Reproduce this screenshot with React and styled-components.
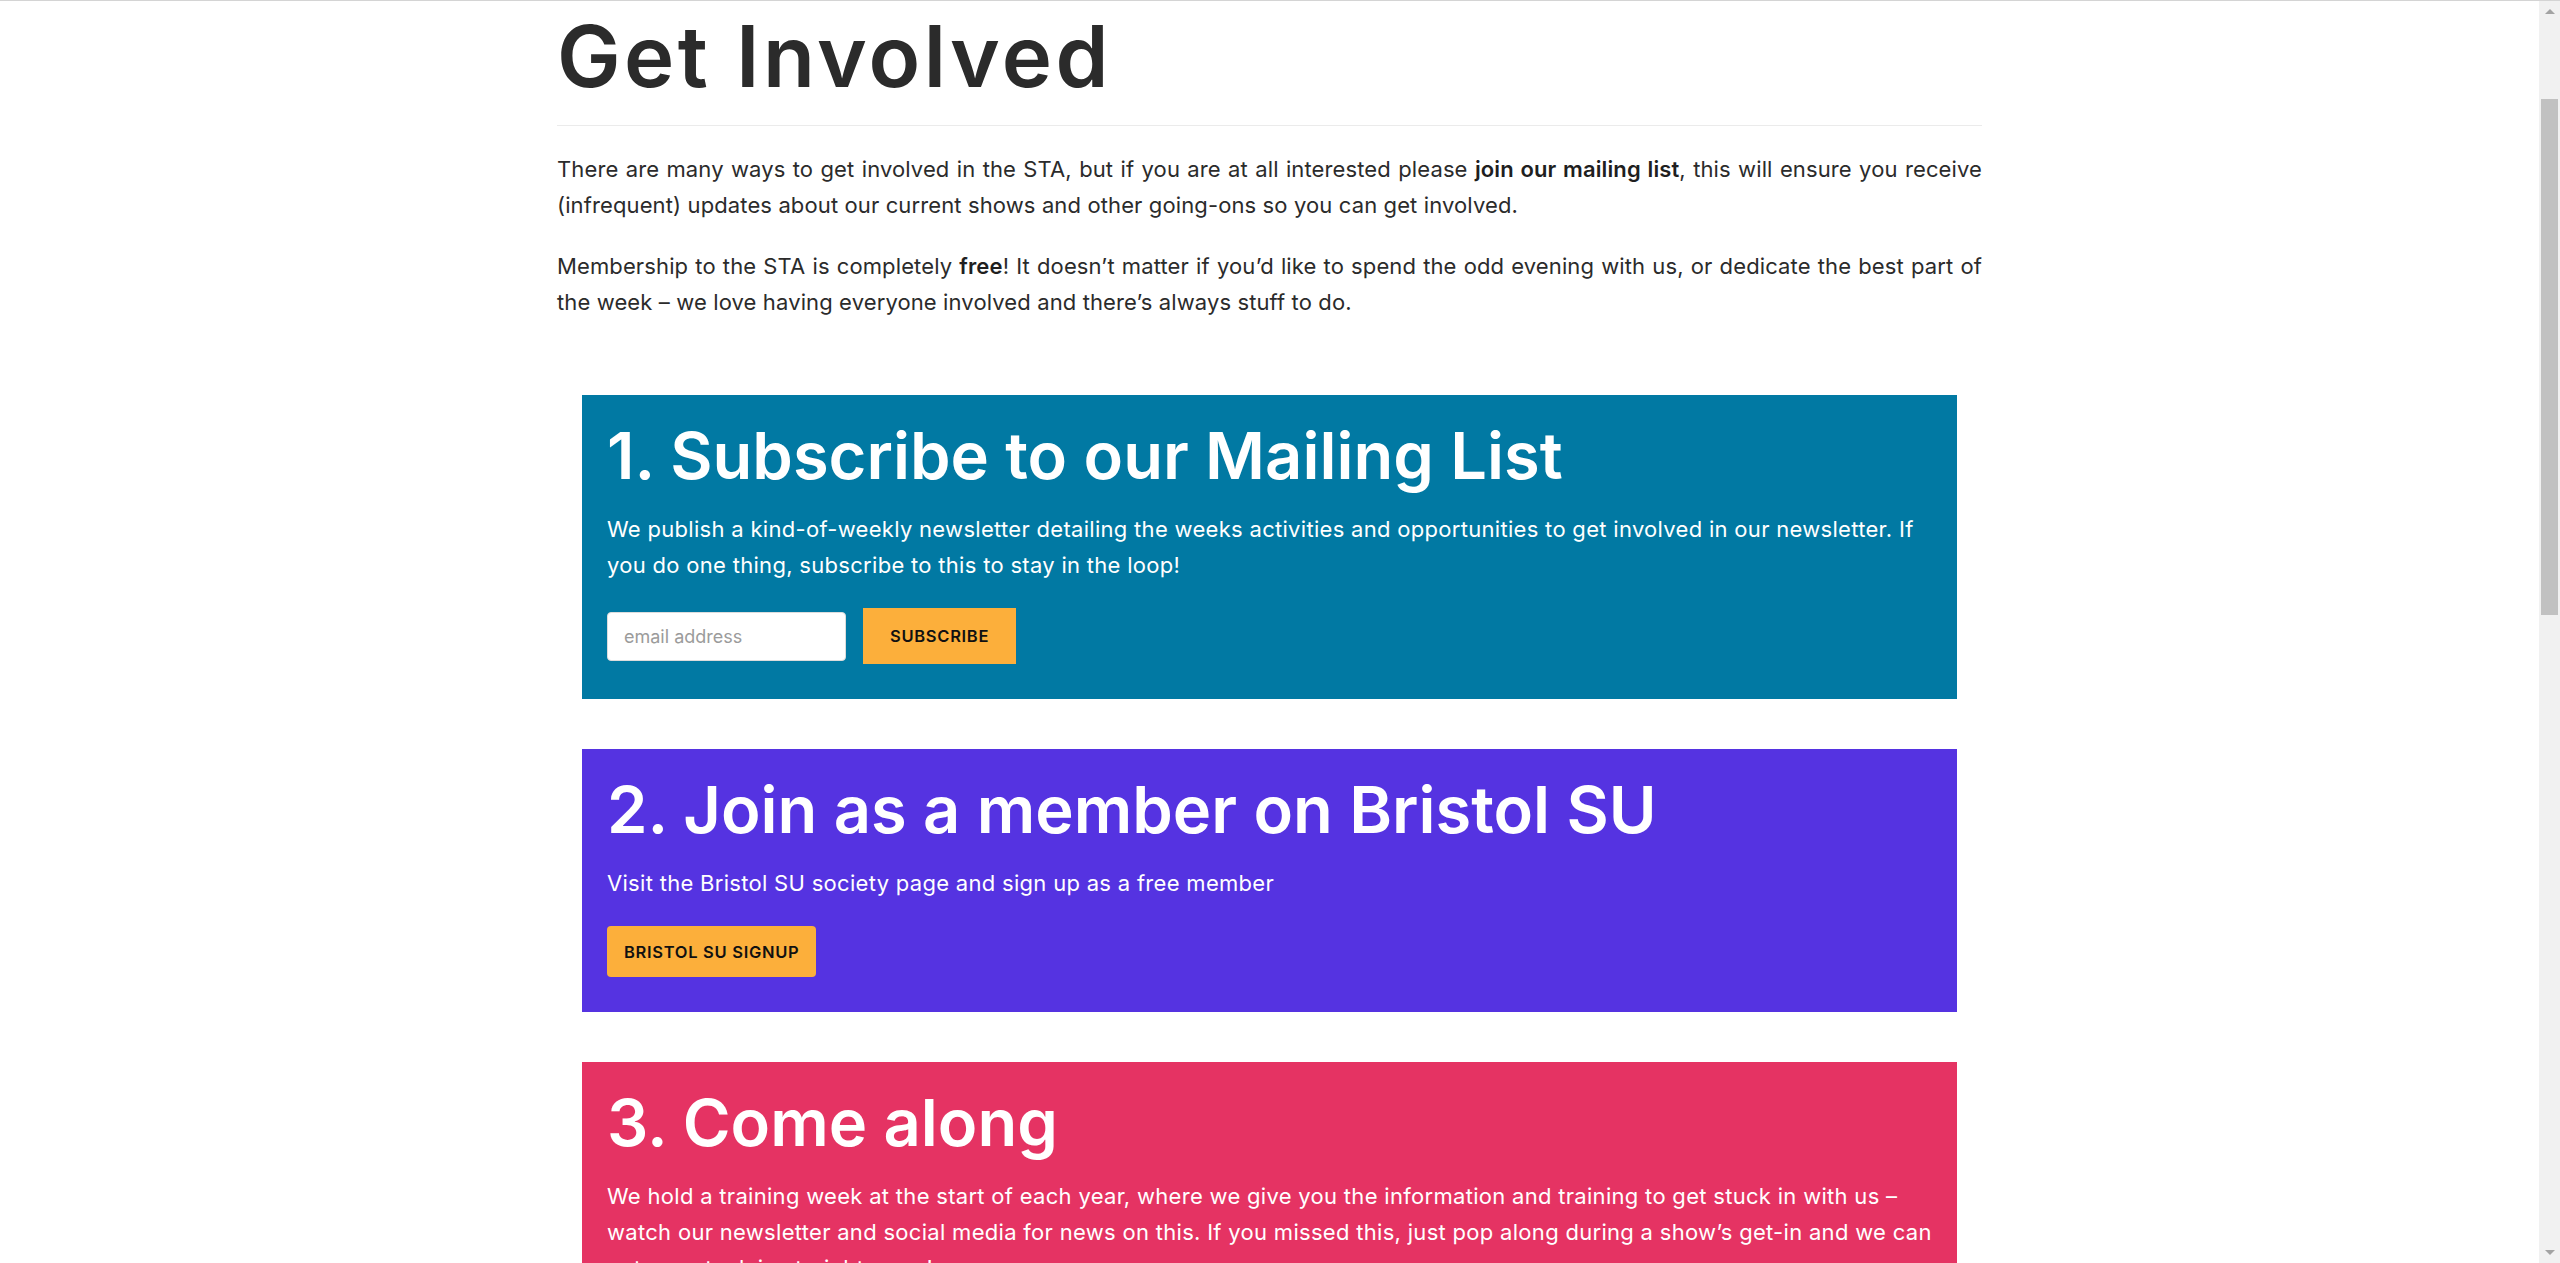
import React from 'react';
import styled, { createGlobalStyle } from 'styled-components';

const GlobalStyle = createGlobalStyle`
  html, body {
    margin: 0;
    padding: 0;
    background: #ffffff;
    overflow: hidden;
  }
  body {
    font-family: Inter, 'Open Sans', sans-serif;
    color: #2b2b2b;
  }
  * {
    box-sizing: border-box;
  }
`;

/**
 * 화면 전체: 본문 영역 + 오른쪽 스크롤바
 */
const Page = styled.div`
  display: flex;
  height: 1263px;
  border-top: 1px solid #d4d4d4;
`;

const Viewport = styled.main`
  flex: 1;
  overflow: hidden;
  background: #ffffff;
`;

const Content = styled.div`
  width: 1425px;
  margin: 0 auto;
  display: flex;
  flex-direction: column;
`;

const Title = styled.h1`
  margin: 0;
  padding: 5px 0 17px;
  font-size: 85px;
  line-height: 102px;
  font-weight: 600;
  letter-spacing: 3.4px;
  color: #2b2b2b;
  border-bottom: 1px solid #ebebeb;
`;

const Intro = styled.section`
  display: flex;
  flex-direction: column;
  gap: 25px;
  padding-top: 25px;
`;

const Paragraph = styled.p`
  margin: 0;
  font-size: 22px;
  line-height: 36px;
  letter-spacing: 0.12px;
  text-align: justify;
  color: #2b2b2b;

  b {
    font-weight: 600;
    color: #1f1f1f;
  }
`;

const Steps = styled.section`
  display: flex;
  flex-direction: column;
  gap: 50px;
  padding: 75px 25px 0;
`;

const Step = styled.article`
  background: ${(p) => p.$bg};
  color: #ffffff;
  padding: 22px 25px 35px;
`;

const StepTitle = styled.h2`
  margin: 0;
  font-size: 65px;
  line-height: 78px;
  font-weight: 600;
  letter-spacing: 0;
`;

const StepText = styled.p`
  margin: 16px 0 0;
  font-size: 22px;
  line-height: 36px;
  letter-spacing: 0.3px;
`;

const FormRow = styled.form`
  display: flex;
  align-items: center;
  gap: 17px;
  margin-top: 25px;
`;

const EmailInput = styled.input`
  width: 239px;
  height: 49px;
  padding: 0 16px;
  border: 1px solid #dcdcdc;
  border-radius: 4px;
  background: #ffffff;
  font-family: inherit;
  font-size: 18px;
  color: #2b2b2b;
  outline: none;

  &::placeholder {
    color: #9b9b9b;
  }
`;

const ActionButton = styled.button`
  display: inline-flex;
  align-items: center;
  justify-content: center;
  height: ${(p) => (p.$square ? '56px' : '51px')};
  padding: 0 ${(p) => (p.$square ? '27px' : '17px')};
  border: none;
  border-radius: ${(p) => (p.$square ? '0' : '4px')};
  background: #fcaf3b;
  color: #111111;
  font-family: inherit;
  font-size: 16.5px;
  font-weight: 600;
  letter-spacing: 0.7px;
  text-transform: uppercase;
  cursor: pointer;
`;

const ButtonRow = styled.div`
  margin-top: 25px;
  display: flex;
`;

/* 브라우저 스크롤바 모양 */
const Scrollbar = styled.aside`
  width: 21px;
  display: flex;
  flex-direction: column;
  background: #f1f1f1;
`;

const ScrollArrow = styled.div`
  height: 21px;
  display: flex;
  align-items: center;
  justify-content: center;

  &::before {
    content: '';
    border-left: 5px solid transparent;
    border-right: 5px solid transparent;
    ${(p) =>
      p.$down
        ? 'border-top: 5px solid #a3a3a3;'
        : 'border-bottom: 5px solid #a3a3a3;'}
  }
`;

const ScrollTrack = styled.div`
  flex: 1;
  display: flex;
  flex-direction: column;
  align-items: center;
`;

const ScrollThumb = styled.div`
  width: 17px;
  height: ${(p) => p.$size}px;
  margin-top: ${(p) => p.$offset}px;
  background: #c1c1c1;
`;

const steps = [
  {
    bg: '#0179a3',
    title: '1. Subscribe to our Mailing List',
    text: 'We publish a kind-of-weekly newsletter detailing the weeks activities and opportunities to get involved in our newsletter. If you do one thing, subscribe to this to stay in the loop!',
    form: true,
  },
  {
    bg: '#5533e1',
    title: '2. Join as a member on Bristol SU',
    text: 'Visit the Bristol SU society page and sign up as a free member',
    button: 'Bristol SU Signup',
  },
  {
    bg: '#e53363',
    title: '3. Come along',
    text: 'We hold a training week at the start of each year, where we give you the information and training to get stuck in with us – watch our newsletter and social media for news on this. If you missed this, just pop along during a show’s get-in and we can get you stuck in straight away!',
  },
];

const App = () => {
  return (
    <>
      <GlobalStyle />
      <Page>
        <Viewport>
          <Content>
            <Title>Get Involved</Title>

            <Intro>
              <Paragraph>
                There are many ways to get involved in the STA, but if you are at
                all interested please <b>join our mailing list</b>, this will
                ensure you receive (infrequent) updates about our current shows
                and other going-ons so you can get involved.
              </Paragraph>
              <Paragraph>
                Membership to the STA is completely <b>free</b>! It doesn’t
                matter if you’d like to spend the odd evening with us, or
                dedicate the best part of the week – we love having everyone
                involved and there’s always stuff to do.
              </Paragraph>
            </Intro>

            <Steps>
              {steps.map((step) => (
                <Step key={step.title} $bg={step.bg}>
                  <StepTitle>{step.title}</StepTitle>
                  <StepText>{step.text}</StepText>
                  {step.form && (
                    <FormRow onSubmit={(e) => e.preventDefault()}>
                      <EmailInput type="email" placeholder="email address" />
                      <ActionButton type="submit" $square>
                        Subscribe
                      </ActionButton>
                    </FormRow>
                  )}
                  {step.button && (
                    <ButtonRow>
                      <ActionButton type="button">{step.button}</ActionButton>
                    </ButtonRow>
                  )}
                </Step>
              ))}
            </Steps>
          </Content>
        </Viewport>

        <Scrollbar>
          <ScrollArrow />
          <ScrollTrack>
            <ScrollThumb $offset={77} $size={516} />
          </ScrollTrack>
          <ScrollArrow $down />
        </Scrollbar>
      </Page>
    </>
  );
};

export default App;
